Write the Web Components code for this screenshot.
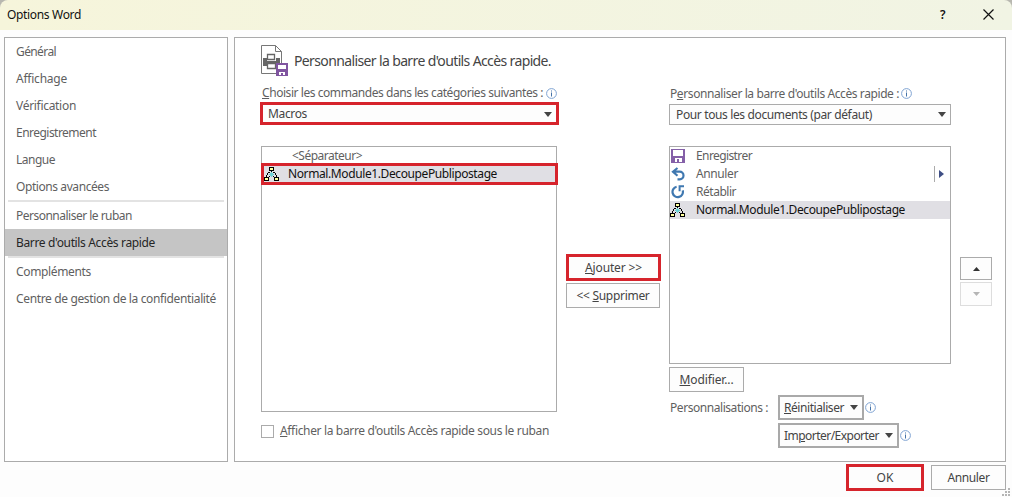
<!DOCTYPE html>
<html lang="fr"><head><meta charset="utf-8"><title>Options Word</title>
<style>html,body{margin:0;padding:0;width:1012px;height:497px;overflow:hidden;background:#fdfdfd;font:12px/18px "Noto Sans","Open Sans",sans-serif;color:#5f5f5f}</style>
</head><body><options-dialog></options-dialog>
<script>
const define=(name,html,init)=>customElements.define(name,class extends HTMLElement{
  constructor(){super();this.attachShadow({mode:'open'}).innerHTML=html;}
  connectedCallback(){if(init)init(this,this.shadowRoot);}
});
const icons={
save:'<svg width="14" height="14" viewBox="0 0 14 14"><path fill="#8560a8" fill-rule="evenodd" d="M0 0h14v14H0zM2 1v6h10V1zM4 9v4h2v-3h2v3h3V9z"/></svg>',
undo:'<svg width="15" height="14" viewBox="0 0 15 14"><path fill="none" stroke="#3f78b0" stroke-width="2.2" d="M6.5 1 2 4.7l4.5 4M2.5 4.7h6.2a3.8 3.8 0 0 1 0 7.6H6.5"/></svg>',
redo:'<svg width="14" height="14" viewBox="0 0 14 14"><path fill="none" stroke="#3f78b0" stroke-width="2.2" d="M5.6 1.8A5.2 5.2 0 1 0 11.7 5.4"/><path fill="none" stroke="#3f78b0" stroke-width="2" d="M13 1.2H8.6v5"/></svg>',
macro:'<svg width="15" height="14" viewBox="0 0 15 14" shape-rendering="crispEdges"><path fill="#000" d="M5 0h5v4H5zM0 10h5v4H0zM10 10h5v4h-5z"/><path fill="#ffff9c" d="M6 1h3v2H6zM1 11h3v2H1zM11 11h3v2h-3z"/><path fill="#000" d="M7 4h1v1H7zM4 5h2v1H4zM9 5h2v1H9zM3 6h1v2H3zM11 6h1v2h-1zM2 8h1v2H2zM12 8h1v2h-1zM5 9h1v1H5zM9 9h1v1H9z"/><path fill="#6cd0d4" d="M7 5h1v1H7zM6 6h3v1H6zM5 7h5v1H5zM6 8h3v1H6zM7 9h1v1H7z"/></svg>'};
/* Text run whose tracking is spread so that it occupies a given width. */
define('ui-text','<style>:host{display:inline-block;white-space:pre;line-height:18px}span{display:inline-block}</style><span><slot></slot></span>',(h,r)=>{
  const w=+h.getAttribute('w'),s=r.querySelector('span');
  s.style.letterSpacing=((w-s.getBoundingClientRect().width)/h.textContent.length)+'px';h.style.width=w+'px';
});
define('ui-info','<style>:host{display:block;width:11px;height:11px}svg{display:block}</style><svg width="11" height="11"><circle cx="5.5" cy="5.500" r="4.900" fill="#fff" stroke="#7fa3d2"/><path fill="#4472a8" d="M5 2.500h1v1H5zM5 4.500h1v4H5z"/></svg>');
define('ui-arrow','<style>:host{display:block}svg{display:block}</style><svg width="8" height="5"><path fill="#444" d="M0 0h8L4 5z"/></svg>');
define('ui-icon','<style>:host{display:block;width:15px;height:14px}svg{display:block}</style><div></div>',(h,r)=>{r.querySelector('div').innerHTML=icons[h.getAttribute('name')];});
define('ui-button','<style>:host{display:flex;box-sizing:border-box;align-items:center;justify-content:center;border:1px solid #ababab;background:#fdfdfd;color:#444;height:25px}:host([thick]){border-width:2px;border-color:#a9a9a9;justify-content:flex-start;padding-left:4px;gap:6px}:host([marked]){border:3px solid #d6242c;height:27px}</style><slot></slot>');
define('ui-combo','<style>:host{display:flex;box-sizing:border-box;align-items:center;justify-content:space-between;border:1px solid #ababab;background:#fdfdfd;color:#444;height:21px;padding:0 4px 0 6px}:host([marked]){border:3px solid #d6242c;height:23px;padding:1px 4px 0 5px}</style><slot></slot><ui-arrow></ui-arrow>');
define('ui-list','<style>:host{display:block;box-sizing:border-box;border:1px solid #ababab;background:#fff}</style><slot></slot>');
define('ui-row','<style>:host{display:flex;box-sizing:border-box;height:18px;align-items:center;position:relative}:host([selected]){background:#e0dfe4;color:#111}:host([marked]){height:22px;margin:-2px -2px 0 -1px;border:3px solid #d6242c}</style><slot></slot>');
define('nav-item','<style>:host{display:flex;height:27px;align-items:center;padding-left:11px}:host([selected]){background:#c5c5c5;color:#262626}</style><slot></slot>');
define('nav-sep','<style>:host{display:block;height:2px;margin:0 3px;background:#e3e3e3}</style>');
define('title-bar',`<style>:host{display:flex;box-sizing:border-box;height:30px;background:linear-gradient(90deg,#f6f5db,#f1f4e4);color:#111;align-items:center;padding:0 18px 0 7px;border-radius:8px 8px 0 0}
ui-text:nth-of-type(2){margin-left:auto;margin-right:37px;font-weight:600}svg{display:block;margin-top:-2px}</style>
<ui-text w="74">Options Word</ui-text><ui-text w="6">?</ui-text><svg width="11" height="11"><path d="M.5.5l10 10M10.500.5l-10 10" stroke="#111" stroke-width="1.200"/></svg>`);
define('side-nav',`<style>:host{display:block;box-sizing:border-box;border:1px solid #ababab;background:#fff}</style>
<nav-item><ui-text w="40">Général</ui-text></nav-item><nav-item><ui-text w="51">Affichage</ui-text></nav-item><nav-item><ui-text w="60">Vérification</ui-text></nav-item><nav-item><ui-text w="80">Enregistrement</ui-text></nav-item><nav-item><ui-text w="39">Langue</ui-text></nav-item><nav-item><ui-text w="93">Options avancées</ui-text></nav-item><nav-sep></nav-sep><nav-item><ui-text w="116">Personnaliser le ruban</ui-text></nav-item><nav-item selected><ui-text w="139">Barre d'outils Accès rapide</ui-text></nav-item><nav-sep></nav-sep><nav-item><ui-text w="75">Compléments</ui-text></nav-item><nav-item><ui-text w="200">Centre de gestion de la confidentialité</ui-text></nav-item>`);
define('main-panel',`<style>:host{display:block;box-sizing:border-box;border:1px solid #ababab;background:#fff;padding:7px 13px 0 26px}
header{display:flex;height:38px;gap:6px;color:#444;font-size:14px}header ui-text{margin-top:7px}svg{display:block}
.cols{display:grid;grid-template-columns:298px 95px 282px 32px;column-gap:0}
.mid{margin:171px 0 0 7px;display:grid;gap:2px;width:95px;align-content:start}.mid ui-button:last-child{width:94px}
.left{width:299px;margin-left:-1px}.right{margin-left:15px;width:282px}
.order{margin:174px 0 0 24px;width:32px;display:grid;gap:2px;align-content:start}.order ui-button{height:23px}.order ui-button:last-child{height:24px;border-color:#ddd}
.label{display:flex;box-sizing:border-box;height:19px;align-items:center;padding:1px 0 0 2px;gap:3px}
.left ui-list{width:296px;height:266px;margin:21px 0 0 1px}.right ui-list{height:218px;margin-top:21px}
.left ui-row:first-child ui-text{margin-left:30px}.left ui-row[marked] ui-text{margin-left:9px}
.right ui-row ui-icon{margin-left:1px}.right ui-row ui-text{margin-left:10px}.right ui-row[selected] ui-icon{margin-left:0}.right ui-row[selected] ui-text{margin-left:11px}
.split{margin-left:auto;display:flex;align-items:center;gap:4px;padding-right:6px}.split i{width:1px;height:16px;background:#ababab}
.check{display:flex;align-items:center;height:18px;margin:10px 0 0 1px;gap:6px}.check i{box-sizing:border-box;width:13px;height:13px;border:1px solid #ababab}
.custom{display:grid;grid-template-columns:109px max-content max-content;row-gap:3px;align-items:center;margin-top:3px}.custom>ui-text{margin-left:1px}.custom ui-info{margin-left:1px}.custom .line{display:flex;align-items:center;grid-column:2/4}</style>
<header><svg width="27" height="31" viewBox="0 0 27 31"><path d="M.5.5h14l6 6v22H.5zM14.500.5v6h6" fill="#fff" stroke="#777"/><path fill="#666" d="M2 13h4v3h9v-3h4v7h-4v-2H6v3H2z"/><path d="M6.500 9.500h7v5h-7zM6.500 18.500h8v5h-8z" fill="#fff" stroke="#666" stroke-width="1.300"/><path d="M15 18h12v13H15z" fill="#8055a0"/><path d="M17 20h8v4h-8zM18 27h6v3h-2v-2h-2v2h-2z" fill="#fff"/></svg><ui-text w="257">Personnaliser la barre d'outils Accès rapide.</ui-text></header>
<div class="cols"><div class="left"><div class="label"><ui-text w="281"><u>C</u>hoisir les commandes dans les catégories suivantes :</ui-text><ui-info></ui-info></div>
<ui-combo marked><ui-text w="39">Macros</ui-text></ui-combo>
<ui-list><ui-row><ui-text w="70">&lt;Séparateur&gt;</ui-text></ui-row><ui-row selected marked><ui-icon name="macro"></ui-icon><ui-text w="209">Normal.Module1.DecoupePublipostage</ui-text></ui-row></ui-list>
<div class="check"><i></i><ui-text w="269"><u>A</u>fficher la barre d'outils Accès rapide sous le ruban</ui-text></div></div>
<div class="mid"><ui-button marked><ui-text w="57"><u>A</u>jouter &gt;&gt;</ui-text></ui-button><ui-button><ui-text w="73">&lt;&lt; <u>S</u>upprimer</ui-text></ui-button></div>
<div class="right"><div class="label" style="padding:0 0 0 1px;height:21px;gap:2px"><ui-text w="229">P<u>e</u>rsonnaliser la barre d'outils Accès rapide :</ui-text><ui-info></ui-info></div>
<ui-combo><ui-text w="196">Pour tous les documents (par défaut)</ui-text></ui-combo>
<ui-list><ui-row><ui-icon name="save"></ui-icon><ui-text w="56">Enregistrer</ui-text></ui-row><ui-row><ui-icon name="undo"></ui-icon><ui-text w="42">Annuler</ui-text><div class="split"><i></i><svg width="5" height="8"><path d="M0 0l5 4-5 4z" fill="#3f4f85"/></svg></div></ui-row><ui-row><ui-icon name="redo"></ui-icon><ui-text w="40">Rétablir</ui-text></ui-row><ui-row selected><ui-icon name="macro"></ui-icon><ui-text w="209">Normal.Module1.DecoupePublipostage</ui-text></ui-row></ui-list>
<ui-button style="width:75px;margin-top:3px"><ui-text w="54"><u>M</u>odifier...</ui-text></ui-button>
<div class="custom"><ui-text w="98">Personnalisations :</ui-text><div class="line"><ui-button thick style="width:86px"><ui-text w="60"><u>R</u>éinitialiser</ui-text><ui-arrow></ui-arrow></ui-button><ui-info></ui-info></div><span></span><div class="line"><ui-button thick style="width:121px"><ui-text w="95">Im<u>p</u>orter/Exporter</ui-text><ui-arrow></ui-arrow></ui-button><ui-info></ui-info></div></div></div>
<div class="order"><ui-button><svg width="7" height="4"><path d="M0 4h7L3.500 0z" fill="#333"/></svg></ui-button><ui-button><svg width="7" height="4"><path d="M0 0h7L3.500 4z" fill="#b5b5b5"/></svg></ui-button></div></div>`);
define('resize-grip','<style>:host{display:block;position:absolute;right:1px;bottom:0}svg{display:block}</style><svg width="10" height="9"><path fill="#b5b5b5" d="M7 0h2v2H7zM4 3h2v2H4zM7 3h2v2H7zM1 6h2v2H1zM4 6h2v2H4zM7 6h2v2H7z"/></svg>');
define('options-dialog',`<style>:host{display:block;position:relative;width:1012px;height:497px;background:linear-gradient(#b8b8b0 0 12px,#fdfdfd 12px)}
.body{display:grid;grid-template-columns:224px 772px;gap:6px;padding:7px 6px 0 4px;height:425px}
footer{display:flex;justify-content:flex-end;padding:2px 6px 0;gap:7px;align-items:center}</style>
<title-bar></title-bar><div class="body"><side-nav></side-nav><main-panel></main-panel></div>
<footer><ui-button marked style="width:78px"><ui-text w="17">OK</ui-text></ui-button><ui-button style="width:75px"><ui-text w="42">Annuler</ui-text></ui-button></footer><resize-grip></resize-grip>`);
</script></body></html>
